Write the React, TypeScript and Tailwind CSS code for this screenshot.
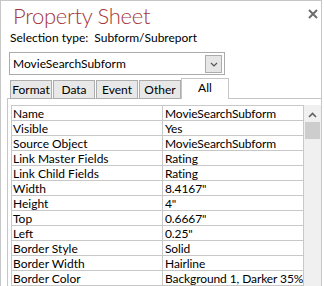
const rows = [
  { label: "Name", value: "MovieSearchSubform" },
  { label: "Visible", value: "Yes" },
  { label: "Source Object", value: "MovieSearchSubform" },
  { label: "Link Master Fields", value: "Rating" },
  { label: "Link Child Fields", value: "Rating" },
  { label: "Width", value: "8.4167\"" },
  { label: "Height", value: "4\"" },
  { label: "Top", value: "0.6667\"" },
  { label: "Left", value: "0.25\"" },
  { label: "Border Style", value: "Solid" },
  { label: "Border Width", value: "Hairline" },
  { label: "Border Color", value: "Background 1, Darker 35%" },
];

const tabs = ["Format", "Data", "Event", "Other"];

export default function App() {
  return (
    <div className="w-[322px] h-[286px] overflow-hidden border border-b-0 border-[#c6c6c6] bg-white flex flex-col font-['Lato','Noto_Sans',sans-serif] text-[12px] text-black">
      {/* title bar */}
      <div className="h-[29px] flex items-start justify-between pl-[12px] pr-[2px]">
        <h1 className="mt-[1px] text-[22px] leading-[28px] font-light tracking-[-0.3px] text-[#a4373a]">
          Property Sheet
        </h1>
        <svg width="10" height="10" viewBox="0 0 10 10" className="mt-[8px] mr-[1px]">
          <path d="M1 1L9 9M9 1L1 9" stroke="#6d6d6d" strokeWidth="2" />
        </svg>
      </div>

      <div className="h-[16px] leading-[16px] pl-[9px] whitespace-pre">
        {"Selection type:  Subform/Subreport"}
      </div>

      {/* object combo */}
      <div className="mt-[6px] ml-[8px] w-[216px] h-[24px] border border-[#ababab] flex items-start justify-between">
        <span className="pl-[3px] leading-[21px]">MovieSearchSubform</span>
        <div className="mt-[2px] mr-[2px] w-[17px] h-[18px] border border-[#acacac] bg-[#e6e6e6] flex items-center justify-center">
          <svg width="8" height="5" viewBox="0 0 8 5">
            <path d="M1 1L4 4L7 1" stroke="#555" strokeWidth="1.2" fill="none" />
          </svg>
        </div>
      </div>

      {/* tabs */}
      <div className="mt-[2px] ml-[6px] h-[22px] flex items-end border-b border-[#c6c6c6] pl-[3px]">
        {tabs.map((t) => (
          <div
            key={t}
            className="h-[19px] mb-[-1px] border border-[#adadad] bg-[#e8e8e8] w-[42px] text-center leading-[18px] mr-[1px] last:mr-0"
          >
            {t}
          </div>
        ))}
        <div className="h-[21px] mb-[-1px] -ml-px w-[48px] border border-b-0 border-[#c6c6c6] bg-white text-center leading-[17px]">
          All
        </div>
      </div>

      {/* property grid */}
      <div className="ml-[6px] flex-1 flex border-l border-[#c6c6c6] pt-[6px] pl-[3px]">
        <div className="w-[293px] border-t border-l border-r border-[#c8c8c8] self-start">
          {rows.map((r) => (
            <div key={r.label} className="h-[15px] flex border-b border-[#c8c8c8] leading-[15px]">
              <div className="w-[151px] pl-[1px] border-r border-[#c8c8c8] whitespace-nowrap overflow-hidden">
                {r.label}
              </div>
              <div className="flex-1 pl-[2px] whitespace-nowrap overflow-hidden tracking-[-0.1px]">{r.value}</div>
            </div>
          ))}
        </div>
        <div className="w-[17px] bg-[#f0f0f0] flex flex-col items-center">
          <svg width="9" height="6" viewBox="0 0 9 6" className="mt-[7px]">
            <path d="M1 5L4.5 1.5L8 5" stroke="#606060" strokeWidth="1.6" fill="none" />
          </svg>
          <div className="mt-[4px] w-[15px] h-[17px] bg-[#cdcdcd]" />
        </div>
      </div>
    </div>
  );
}
